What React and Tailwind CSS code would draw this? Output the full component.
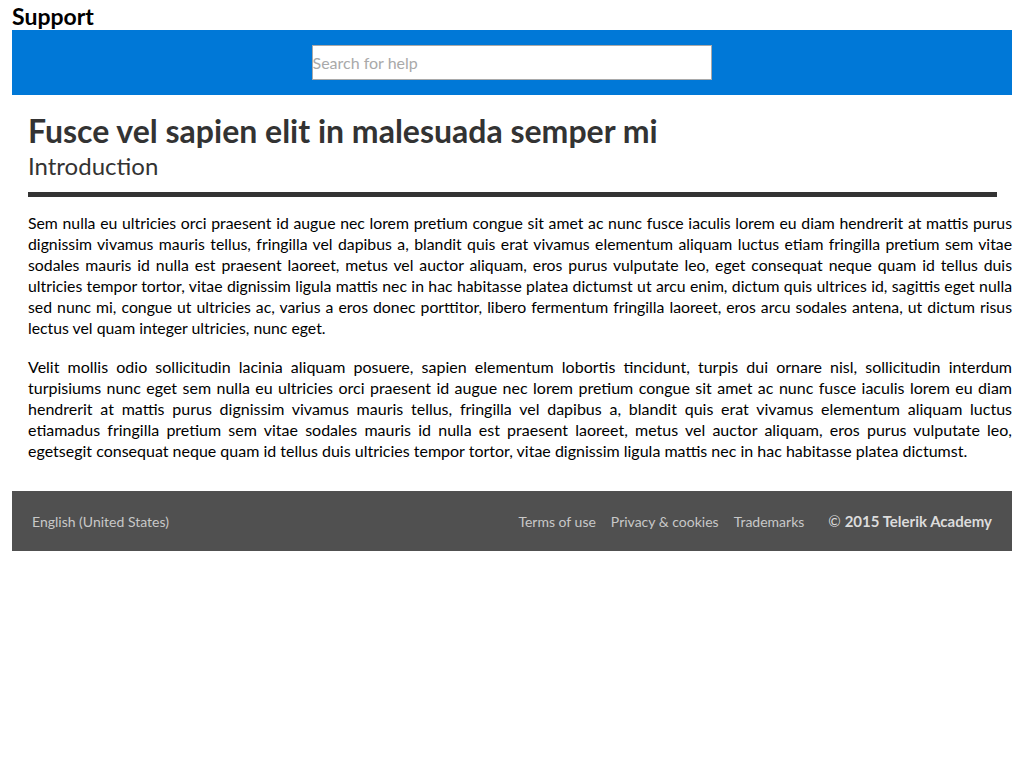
export default function App() {
  return (
    <div className="px-3 font-['Segoe_UI',Lato,sans-serif] text-black">
      <h1 className="text-[23px] font-bold leading-[30px] pt-[1px] h-[30px]">Support</h1>

      <div className="bg-[#0078d7] h-[65px] flex items-center justify-center pr-[1px]">
        <input
          type="text"
          placeholder="Search for help"
          className="w-[400px] h-[35px] bg-white border border-[#a9a9a9] text-[16px] px-0 placeholder:text-[#a9a9a9] outline-none"
        />
      </div>

      <div className="pl-4 pt-[18px]">
        <h2 className="text-[32px] font-bold text-[#333] leading-[36px]">Fusce vel sapien elit in malesuada semper mi</h2>
        <h3 className="text-[24px] text-[#333] leading-[32px] mt-[1px]">Introduction</h3>
        <div className="h-[5px] bg-[#333] mt-[10px] mr-[15px]" />

        <div className="leading-[21px] text-justify pt-[15px]">
          <p className="text-[15.8px]">
            Sem nulla eu ultricies orci praesent id augue nec lorem pretium congue sit amet ac nunc fusce iaculis lorem eu
            diam hendrerit at mattis purus dignissim vivamus mauris tellus, fringilla vel dapibus a, blandit quis erat
            vivamus elementum aliquam luctus etiam fringilla pretium sem vitae sodales mauris id nulla est praesent laoreet,
            metus vel auctor aliquam, eros purus vulputate leo, eget consequat neque quam id tellus duis ultricies tempor
            tortor, vitae dignissim ligula mattis nec in hac habitasse platea dictumst ut arcu enim, dictum quis ultrices id,
            sagittis eget nulla sed nunc mi, congue ut ultricies ac, varius a eros donec porttitor, libero fermentum
            fringilla laoreet, eros arcu sodales antena, ut dictum risus lectus vel quam integer ultricies, nunc eget.
          </p>
          <p className="mt-[18px] text-[16px]">
            Velit mollis odio sollicitudin lacinia aliquam posuere, sapien elementum lobortis tincidunt, turpis dui ornare
            nisl, sollicitudin interdum turpisiums nunc eget sem nulla eu ultricies orci praesent id augue nec lorem pretium
            congue sit amet ac nunc fusce iaculis lorem eu diam hendrerit at mattis purus dignissim vivamus mauris tellus,
            fringilla vel dapibus a, blandit quis erat vivamus elementum aliquam luctus etiamadus fringilla pretium sem vitae
            sodales mauris id nulla est praesent laoreet, metus vel auctor aliquam, eros purus vulputate leo, egetsegit
            consequat neque quam id tellus duis ultricies tempor tortor, vitae dignissim ligula mattis nec in hac habitasse
            platea dictumst.
          </p>
        </div>
      </div>

      <footer className="mt-[30px] h-[60px] bg-[#505050] flex items-center justify-between px-5 text-[14px] text-[#c8c8c8]">
        <span>English (United States)</span>
        <div className="flex items-center">
          <a className="mr-[15px]">Terms of use</a>
          <a className="mr-[15px]">Privacy &amp; cookies</a>
          <a className="mr-[24px]">Trademarks</a>
          <span className="text-[15px] text-[#dcdcdc]">
            © <b>2015 Telerik Academy</b>
          </span>
        </div>
      </footer>
    </div>
  );
}
